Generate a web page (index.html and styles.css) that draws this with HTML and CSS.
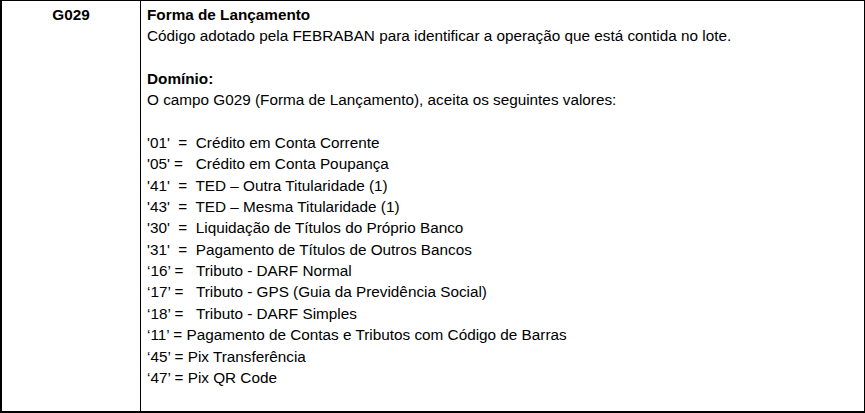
FILE: index.html
```html
<!DOCTYPE html>
<html lang="pt-BR">
<head>
  <meta charset="UTF-8">
  <meta name="viewport" content="width=device-width, initial-scale=1.0">
  <title>G029 - Forma de Lançamento</title>
  <link rel="stylesheet" href="styles.css">
</head>
<body>
  <div class="page">
    <table class="campos">
      <tr>
        <td class="cod">G029</td>
        <td class="desc">
          <p class="tit">Forma de Lançamento</p>
          <p>Código adotado pela FEBRABAN para identificar a operação que está contida no lote.</p>
          <p>&nbsp;</p>
          <p class="tit">Domínio:</p>
          <p>O campo G029 (Forma de Lançamento), aceita os seguintes valores:</p>
          <p>&nbsp;</p>
          <p class="op">'01'  =  Crédito em Conta Corrente</p>
          <p class="op">'05' =   Crédito em Conta Poupança</p>
          <p class="op">'41'  =  TED – Outra Titularidade (1)</p>
          <p class="op">'43'  =  TED – Mesma Titularidade (1)</p>
          <p class="op">'30'  =  Liquidação de Títulos do Próprio Banco</p>
          <p class="op">'31'  =  Pagamento de Títulos de Outros Bancos</p>
          <p class="op">‘16’ =   Tributo - DARF Normal</p>
          <p class="op">‘17’ =   Tributo - GPS (Guia da Previdência Social)</p>
          <p class="op">‘18’ =   Tributo - DARF Simples</p>
          <p class="op">‘11’ = Pagamento de Contas e Tributos com Código de Barras</p>
          <p class="op">‘45’ = Pix Transferência</p>
          <p class="op">‘47’ = Pix QR Code</p>
        </td>
      </tr>
      <tr class="prox">
        <td></td>
        <td></td>
      </tr>
    </table>
  </div>
</body>
</html>
```

FILE: styles.css
```css
*{
  margin: 0;
  padding: 0;
}
body{
  background: #fff;
  color: #000;
  font-family: "Liberation Sans", Arial, sans-serif;
  font-size: 15.3px;
}
.page{
  height: 413px;
  overflow: hidden;
}
.campos{
  width: 865px;
  border-collapse: collapse;
}
.campos td{
  border: 1px solid #000;
  vertical-align: top;
  line-height: 21.38px;
}
.campos tr:first-child td{
  height: 407px;
}
.campos td:first-child{
  border-left-width: 2px;
}
.cod{
  width: 138px;
  text-align: center;
  font-weight: bold;
  padding-top: 2.6px;
}
.desc{
  padding: 2.6px 6px 0;
  border-right-width: 2px;
}
.tit{
  font-weight: bold;
}
.op{
  white-space: pre;
}
.prox td{
  height: 20px;
  border-top-width: 2px;
}
```
